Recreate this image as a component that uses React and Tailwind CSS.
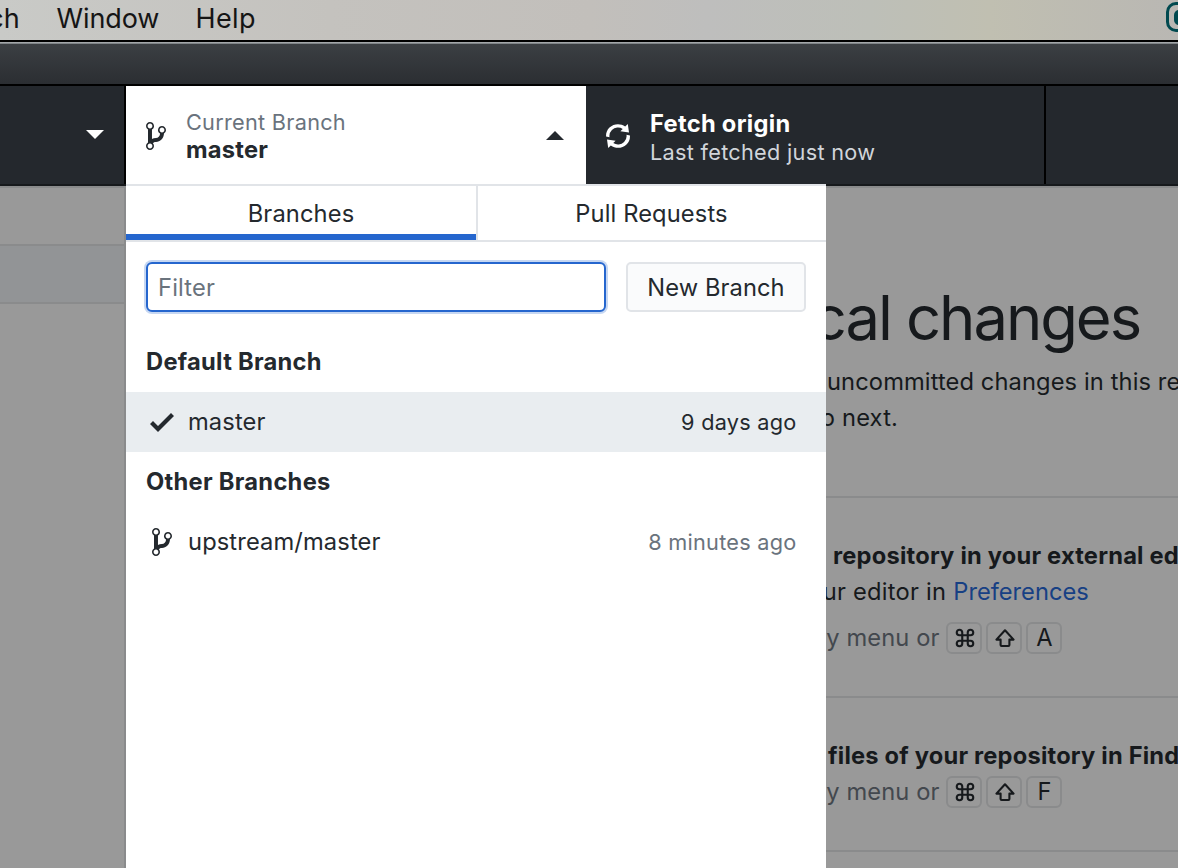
import { Command } from 'lucide-react';

function BranchIcon({ className }) {
  return (
    <svg viewBox="0 0 10 16" className={`h-8 w-5 shrink-0 fill-current ${className}`}>
      <path
        fillRule="evenodd"
        d="M10 5c0-1.11-.89-2-2-2a1.993 1.993 0 0 0-1 3.72v.3c-.02.52-.23.98-.63 1.38-.4.4-.86.61-1.38.63-.83.02-1.48.16-2 .45V4.72a1.993 1.993 0 0 0-1-3.72C.88 1 0 1.89 0 3a2 2 0 0 0 1 1.72v6.56c-.59.35-1 .99-1 1.72 0 1.11.89 2 2 2 1.11 0 2-.89 2-2 0-.53-.2-1-.53-1.36.09-.06.48-.41.59-.47.25-.11.56-.17.94-.17 1.05-.05 1.95-.45 2.75-1.25S8.95 7.77 9 6.73h-.02C9.59 6.37 10 5.73 10 5zM2 1.8c.66 0 1.2.55 1.2 1.2 0 .65-.55 1.2-1.2 1.2C1.35 4.2.8 3.65.8 3c0-.65.55-1.2 1.2-1.2zm0 12.41c-.66 0-1.2-.55-1.2-1.2 0-.65.55-1.2 1.2-1.2.65 0 1.2.55 1.2 1.2 0 .65-.55 1.2-1.2 1.2zm6-8c-.66 0-1.2-.55-1.2-1.2 0-.65.55-1.2 1.2-1.2.65 0 1.2.55 1.2 1.2 0 .65-.55 1.2-1.2 1.2z"
      />
    </svg>
  );
}

function SyncIcon({ className }) {
  return (
    <svg viewBox="0 0 12 16" className={`h-8 w-6 shrink-0 fill-current ${className}`}>
      <path
        fillRule="evenodd"
        d="M10.24 7.4a4.15 4.15 0 0 1-1.2 3.6 4.346 4.346 0 0 1-5.41.54L4.8 10.4.5 9.8l.6 4.2 1.31-1.26c2.36 1.74 5.7 1.57 7.84-.54a5.876 5.876 0 0 0 1.74-4.46l-1.75-.34zM2.96 5a4.346 4.346 0 0 1 5.41-.54L7.2 5.6l4.3.6-.6-4.2-1.31 1.26c-2.36-1.74-5.7-1.57-7.85.54C.5 5.03-.06 6.65.01 8.26l1.75.35A4.17 4.17 0 0 1 2.96 5z"
      />
    </svg>
  );
}

function CheckIcon({ className }) {
  return (
    <svg viewBox="0 0 12 16" className={`h-8 w-6 shrink-0 fill-current ${className}`}>
      <path fillRule="evenodd" d="M12 5l-8 8-4-4 1.5-1.5L4 10l6.5-6.5L12 5z" />
    </svg>
  );
}

function Caret({ className }) {
  return (
    <svg viewBox="0 0 18 9" className={`h-[9px] w-[18px] shrink-0 fill-current ${className}`}>
      <path d="M0 0l9 9 9-9z" />
    </svg>
  );
}

function ShiftIcon() {
  return (
    <svg
      viewBox="0 0 22 20"
      className="ml-px h-5 w-[22px] fill-none stroke-current stroke-[2.1]"
      strokeLinejoin="round"
    >
      <path d="M11 2.3L19.6 11.6H15.4V17Q15.4 18 14.4 18H7.6Q6.6 18 6.6 17V11.6H2.4Z" />
    </svg>
  );
}

function Key({ children }) {
  return (
    <kbd className="flex h-8 w-9 items-center justify-center rounded-md border-2 border-[#8a8b8c] font-['Inter',sans-serif] text-[#16191c]">
      {children}
    </kbd>
  );
}

function Shortcut({ letter, className }) {
  return (
    <div className={`flex h-8 ${className}`}>
      <div className="flex w-[820px] leading-[31px] text-[#43484e]">
        <span className="w-[720.5px] shrink-0 text-right whitespace-pre">Repository </span>
        <span className="tracking-[0.1px] whitespace-pre">menu or</span>
      </div>
      <div className="flex gap-1">
        <Key>
          <Command size={22} strokeWidth={2.3} className="ml-px" />
        </Key>
        <Key>
          <ShiftIcon />
        </Key>
        <Key>
          <span className="pl-px leading-7">{letter}</span>
        </Key>
      </div>
    </div>
  );
}

function Line({ lead = '', leadWidth, className = '', children }) {
  return (
    <div className={`flex h-9 leading-[37px] whitespace-pre ${className}`}>
      <span className={`shrink-0 text-right ${leadWidth}`}>{lead}</span>
      <span>{children}</span>
    </div>
  );
}

function BranchRow({ icon, name, when, selected }) {
  return (
    <div className={`flex h-[60px] pr-[29.5px] ${selected ? 'bg-[#e9edf0]' : ''}`}>
      <div className="w-[62px] shrink-0">{icon}</div>
      <span className="flex-1 leading-[59px] tracking-[0.12px]">{name}</span>
      <span
        className={`text-[21.7px] leading-[60px] tracking-[0.25px] ${selected ? 'text-[#24292e]' : 'text-[#6a737d]'}`}
      >
        {when}
      </span>
    </div>
  );
}

function GroupTitle({ children }) {
  return (
    <h2 className="h-[60px] pl-5 leading-[59px] font-[650] tracking-[0.28px]">{children}</h2>
  );
}

function BranchMenu() {
  return (
    <div className="absolute top-[184px] left-[126px] h-[684px] w-[700px] border-t-2 border-[#e1e4e8] bg-white">
      <div className="flex h-14 border-b-2 border-[#e1e4e8] text-center leading-[55px] tracking-[0.12px]">
        <div className="h-[54px] w-[350px] border-b-[6px] border-[#2566ce]">Branches</div>
        <div className="h-[54px] w-[350px] border-l-2 border-[#e1e4e8] pr-px">Pull Requests</div>
      </div>
      <div className="flex gap-5 px-5 pt-5">
        <input
          placeholder="Filter"
          className="h-[50px] w-[460px] rounded-md border-2 border-[#2566ce] bg-white pt-px pl-[10px] tracking-[0.15px] ring-2 ring-[#c6d7f2] outline-none placeholder:text-[#6a737d]"
        />
        <button className="h-[50px] w-[180px] rounded-[5px] border-2 border-[#e1e4e8] bg-[#fafbfc] leading-[47px] tracking-[0.08px]">
          New Branch
        </button>
      </div>
      <div className="pt-5">
        <GroupTitle>Default Branch</GroupTitle>
        <BranchRow
          icon={<CheckIcon className="mt-[14px] ml-6" />}
          name="master"
          when="9 days ago"
          selected
        />
        <GroupTitle>Other Branches</GroupTitle>
        <BranchRow
          icon={<BranchIcon className="mt-[14px] ml-[26px]" />}
          name="upstream/master"
          when="8 minutes ago"
        />
      </div>
    </div>
  );
}

export default function App() {
  return (
    <div className="relative flex h-[868px] w-[1178px] flex-col overflow-hidden bg-[#999999] font-['Inter',sans-serif] text-[23.7px] text-[#24292e]">
      <div className="flex h-10 shrink-0 justify-between overflow-hidden bg-[linear-gradient(to_right,#c9cac7,#c4c2be_28%,#c2bfbb_50%,#bebebd_60%,#bdbfb8_74%,#c0bfb1_84%,#b9b7b3)] text-[27px] leading-[37px] text-[#151515]">
        <div className="flex whitespace-pre">
          <div className="flex w-5 justify-end tracking-[0.2px]">ch</div>
          <div className="w-[139px] pl-[36.5px] tracking-[-0.1px]">Window</div>
          <div className="pl-[36.5px] tracking-[0.4px]">Help</div>
        </div>
        <div className="-mr-[18px] mt-[2px] flex h-[30px] w-[30px] shrink-0 items-center justify-center rounded-[10px] border-[3px] border-[#00494f]">
          <div className="h-[15px] w-[15px] rounded-[5px] bg-[#00494f]" />
        </div>
      </div>
      <div className="h-[46px] shrink-0 border-y-2 border-black bg-linear-to-b from-[#3c4044] to-[#2b2e32]">
        <div className="h-0.5 bg-linear-to-b from-[#b4b8bb] to-[#6f7478]" />
      </div>
      <div className="flex h-[100px] shrink-0 border-b-2 border-[#16191c] bg-[#24292e]">
        <div className="flex w-[126px] justify-end border-r-2 border-black bg-[#24282d] pt-11 pr-5">
          <Caret className="text-white" />
        </div>
        <div className="flex w-[460px] bg-white pl-5">
          <BranchIcon className="mt-[34px]" />
          <div className="flex-1 pt-[22px] pl-5">
            <div className="text-[21.7px] leading-7 tracking-[0.27px] text-[#6a737d]">Current Branch</div>
            <div className="leading-[27px] font-[650] tracking-[0.2px]">master</div>
          </div>
          <Caret className="mt-[45px] mr-[22px] rotate-180" />
        </div>
        <div className="flex w-[460px] border-r-2 border-black bg-[#24282d] pl-5 text-white">
          <SyncIcon className="mt-[34px]" />
          <div className="pt-6 pl-5">
            <div className="leading-[27px] font-[650] tracking-[0.3px]">Fetch origin</div>
            <div className="text-[21.7px] leading-[30px] tracking-[0.29px] text-[#d1d5da]">
              Last fetched just now
            </div>
          </div>
        </div>
        <div className="flex-1 bg-[#24282d]" />
      </div>
      <div className="flex flex-1 border-t-2 border-[#8a8b8c] text-[#16191c]">
        <div className="w-[126px] shrink-0 border-r-2 border-[#8a8b8c]">
          <div className="h-[58px] border-b-2 border-[#8a8b8c]" />
          <div className="h-[58px] border-b-2 border-[#8a8b8c] bg-[#929496]" />
        </div>
        <div className="w-[1052px] shrink-0 overflow-hidden pt-[94px] tracking-[0.17px]">
          <h1 className="flex h-[72px] text-[61.5px] leading-[72px] font-[370] tracking-[-2.05px] whitespace-pre">
            <span className="w-[780px] shrink-0 text-right">local </span>
            <span>changes</span>
          </h1>
          <Line leadWidth="w-[701px]" className="mt-[9px]">
            <span className="tracking-[0.1px]">uncommitted changes in this repository</span>
          </Line>
          <Line lead="to do " leadWidth="w-[716px]">
            next.
          </Line>
          <div className="mt-[61px] h-0.5 bg-[#8a8b8c]" />
          <Line leadWidth="w-[707px]" className="mt-[39px] font-[650] tracking-[0.2px]">
            repository in your external editor
          </Line>
          <Line lead="your " leadWidth="w-[727px]" className="tracking-[0.25px]">
            editor in <span className="tracking-[0px] text-[#174084]">Preferences</span>
          </Line>
          <Shortcut letter="A" className="mt-[13px]" />
          <div className="mt-[42px] h-0.5 bg-[#8a8b8c]" />
          <Line leadWidth="w-[702px]" className="mt-[39px] font-[650] tracking-[0.19px]">
            files of your repository in Finder
          </Line>
          <Shortcut letter="F" className="mt-[3px]" />
          <div className="mt-[42px] h-0.5 bg-[#8a8b8c]" />
        </div>
      </div>
      <BranchMenu />
    </div>
  );
}
